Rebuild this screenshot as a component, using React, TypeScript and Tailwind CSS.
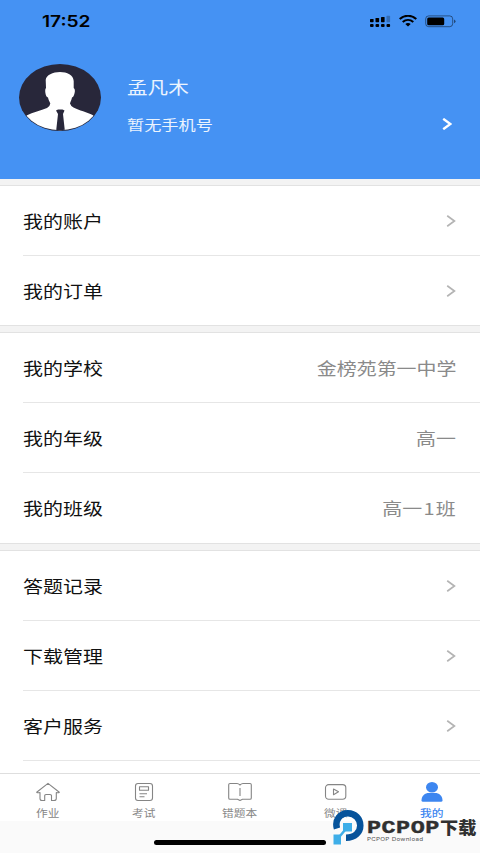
import { ReactNode } from "react";
import clsx from "clsx";

type Row = { label: string; value?: ReactNode };

const groups: Row[][] = [
	[{ label: "我的账户" }, { label: "我的订单" }],
	[
		{ label: "我的学校", value: "金榜苑第一中学" },
		{ label: "我的年级", value: "高一" },
		{ label: "我的班级", value: <>高一<span className="mx-px">1</span>班</> },
	],
	[{ label: "答题记录" }, { label: "下载管理" }, { label: "客户服务" }],
];

const Chevron = ({ className, width = 1.7 }: { className?: string; width?: number }) => (
	<svg className={className} viewBox="0 0 10 12" fill="none" stroke="currentColor" strokeWidth={width}>
		<path d="M1.2 .8 8.4 6 1.2 11.2" />
	</svg>
);

const StatusBar = () => (
	<div className="flex h-11 items-start justify-between pl-[42px] pr-6 pt-[11px] text-black">
		<span className="origin-left scale-x-[1.21] font-['Inter'] text-[15.8px] font-semibold leading-[21px]">17:52</span>
		<div className="flex pt-[4px]">
			<svg className="mr-2 h-[13px] w-[21px]" viewBox="0 0 21 13" fill="currentColor">
				<rect x="0" y="4" width="3.6" height="3.2" rx=".6" />
				<rect x="5.5" y="3" width="3.6" height="4.2" rx=".6" />
				<rect x="11" y="2" width="3.6" height="5.2" rx=".6" />
				<rect x="16.5" y=".8" width="3.6" height="6.4" rx=".6" opacity=".25" />
				<rect x="0" y="9" width="3.6" height="3" rx="1" />
				<rect x="5.5" y="9" width="3.6" height="3" rx="1" />
				<rect x="11" y="9" width="3.6" height="3" rx="1" />
				<rect x="16.5" y="9" width="3.6" height="3" rx="1" />
			</svg>
			<svg className="mr-2 h-[13px] w-[18px]" viewBox="0 0 18 13" fill="none" stroke="currentColor">
				<path d="M.7 4.1C5.4-.3 12.6-.3 17.3 4.1" strokeWidth="2.1" />
				<path d="M3.7 7C6.8 4.2 11.2 4.2 14.3 7" strokeWidth="2" />
				<path d="M6.3 9C7.8 7.7 10.2 7.7 11.7 9L9 11.6Z" fill="currentColor" stroke="none" />
			</svg>
			<svg className="h-[13px] w-[31px]" viewBox="0 0 31 13">
				<rect x=".7" y=".9" width="27" height="10.8" rx="3" fill="none" stroke="#000" strokeOpacity=".45" />
				<rect x="2.2" y="2.4" width="17" height="7.8" rx="1.5" />
				<path d="M29 4.4q1.5.4 1.5 1.9T29 8.2Z" opacity=".5" />
			</svg>
		</div>
	</div>
);

const Avatar = () => (
	<svg className="h-[68px] w-[82px]" viewBox="0 0 82 68">
		<defs>
			<clipPath id="avatar">
				<ellipse cx="41" cy="33.5" rx="40.3" ry="32.8" />
			</clipPath>
		</defs>
		<ellipse cx="41" cy="33.5" rx="41" ry="33.5" fill="#28273a" />
		<g clipPath="url(#avatar)">
			<path
				fill="#fff"
				d="M26.7 16C27 11 34 8 41 8S54.5 11 54.7 17V24Q56.5 25 55.6 29T53 33.5C52.5 36 51.5 37.5 51 39.5Q52 42.5 54.5 43.5C60 46.5 68 48 74.5 51.5L72 62 41 68 10 62 7.5 51.5C14 48 22 46.5 28 44Q31 42.5 31.3 39.5C30.5 37.5 29.5 36 29 33.5Q27 33 26.4 29T27 24Z"
			/>
			<path fill="#28273a" d="M37 46.5 39 45.5H43.5L45.5 46.5 44 50 46 68H37L39 50Z" />
		</g>
	</svg>
);

const MenuRow = ({ label, value, divider, short }: Row & { divider: boolean; short: boolean }) => (
	<div
		className={clsx(
			"ml-[23px] flex items-center justify-between pr-6",
			short ? "h-[69px]" : "h-[70px]",
			divider && "border-b border-[#e6e6e6]",
		)}
	>
		<span className="origin-left scale-x-[1.21] pt-px text-[16.5px] text-[#111]">{label}</span>
		{value ? (
			<span className="origin-right scale-x-[1.21] pt-px text-[16.5px] text-[#8a8a8a]">{value}</span>
		) : (
			<Chevron className="h-3 w-[10px] text-[#b4b4b4]" />
		)}
	</div>
);

const Tab = ({ label, active, children }: { label: string; active?: boolean; children: ReactNode }) => (
	<div className={clsx("flex flex-1 flex-col items-center pt-2", active ? "text-[#3d86f0]" : "text-[#858585]")}>
		<svg className="h-5 w-6" viewBox="0 0 24 20" fill="none" stroke="currentColor" strokeWidth="1.1" strokeLinejoin="round">
			{children}
		</svg>
		<span className={clsx("mt-[3px] scale-x-[1.21] text-[9.7px] leading-4", active && "font-medium")}>{label}</span>
	</div>
);

const TabBar = () => (
	<div className="flex h-12 shrink-0 border-t border-[#dedede] bg-white">
		<Tab label="作业">
			<path d="M12 1.4 23.3 10.3Q23.3 11 20.3 10.5V16.5Q20.3 18.5 18 18.5H15.5V13.5Q15.5 12.5 14 12.5H10Q8.7 12.5 8.7 13.5V18.5H6Q4 18.5 4 16.5V10.5Q.7 11 .7 10.3Z" />
		</Tab>
		<Tab label="考试">
			<rect x="3.5" y="1.5" width="17" height="17" rx="2.5" />
			<path d="M7.5 4.7H16.5V8.3H7.5ZM7.5 11.7H15M7.5 14.7H12.5" />
		</Tab>
		<Tab label="错题本">
			<path d="M12 3Q10.5 1.5 9 1.5H2Q.7 1.5 .7 2.8V16Q.7 17.3 2 17.3H9.5L12 18.5 14.5 17.3H22Q23.3 17.3 23.3 16V2.8Q23.3 1.5 22 1.5H15Q13.5 1.5 12 3ZM12 6V14" />
		</Tab>
		<Tab label="微课">
			<rect x="1.5" y="2.6" width="20.3" height="14.6" rx="3.2" />
			<path d="M9.5 7 14.5 9.8 9.5 12.7Z" />
		</Tab>
		<Tab label="我的" active>
			<ellipse cx="12" cy="5.3" rx="6" ry="5.2" fill="currentColor" stroke="none" />
			<path d="M1.5 18.5C1.5 13.5 5 11 9 11H15C19 11 22.5 13.5 22.5 18.5Q22.5 19.8 21 19.8H3Q1.5 19.8 1.5 18.5Z" fill="currentColor" stroke="none" />
		</Tab>
	</div>
);

const Watermark = () => (
	<div className="absolute left-[332px] top-[809px] flex">
		<svg className="h-9 w-8 shrink-0" viewBox="0 0 32 36">
			<path d="M5 19.5C2.5 11 8 4.3 16 4.3C23 4.3 28.3 9.8 28.3 16.5S23 28.7 14 28.7" fill="none" stroke="#06539b" strokeWidth="6.5" />
			<path d="M11 14H20V22.5H11Z" fill="#3eaee8" />
			<path d="M1.5 25.5H9V35.5H1.5Z" fill="#3eaee8" />
			<path d="M8 27 13 21" stroke="#3eaee8" strokeWidth="2.5" />
		</svg>
		<div className="flex w-[112px] flex-col pl-[3px] pt-[10px] text-[#303030]">
			<div className="flex h-4 items-center whitespace-nowrap leading-4">
				<span className="w-[73px]">
					<span className="inline-block origin-left scale-x-[1.3] font-['Liberation_Mono'] text-[18px] font-bold tracking-[0.4px] [-webkit-text-stroke:0.4px_#303030]">
						PCPOP
					</span>
				</span>
				<span className="origin-left scale-x-[1.1] text-[16.5px] font-black">下载</span>
			</div>
			<span className="mt-px origin-left scale-x-[1.21] whitespace-nowrap font-['Inter'] text-[5.2px] leading-[6px] tracking-[0.2px] text-[#555]">
				PCPOP Download
			</span>
		</div>
	</div>
);

export default function App() {
	return (
		<div className="relative flex h-[853px] w-[480px] flex-col overflow-hidden bg-white font-['Noto_Sans_CJK_SC',sans-serif]">
			<header className="h-[179px] shrink-0 bg-[#4592f3] text-white">
				<StatusBar />
				<div className="flex pl-[19px] pt-5">
					<Avatar />
					<div className="ml-[26px] flex flex-col pt-[11px] text-white/90">
						<span className="origin-left scale-x-[1.21] text-[17px] leading-6">孟凡木</span>
						<span className="mt-[15px] origin-left scale-x-[1.21] text-[14.2px] leading-5">暂无手机号</span>
					</div>
					<Chevron className="ml-auto mr-7 mt-[54px] h-3 w-[10px]" width={2.4} />
				</div>
			</header>
			<main className="flex-1 overflow-hidden">
				{groups.map((rows, i) => (
					<section key={i}>
						<div className={clsx("border-b border-[#e2e2e2] bg-[#f3f3f3]", i === 0 ? "h-[7px]" : "h-2 border-t")} />
						{rows.map((row, j) => (
							<MenuRow key={row.label} {...row} divider={i === 2 || j < rows.length - 1} short={i === 0 && j === 1} />
						))}
					</section>
				))}
			</main>
			<TabBar />
			<div className="flex h-8 shrink-0 justify-center bg-[#fafafa] pt-[19px]">
				<div className="h-[5px] w-[172px] rounded-full bg-black" />
			</div>
			<Watermark />
		</div>
	);
}
